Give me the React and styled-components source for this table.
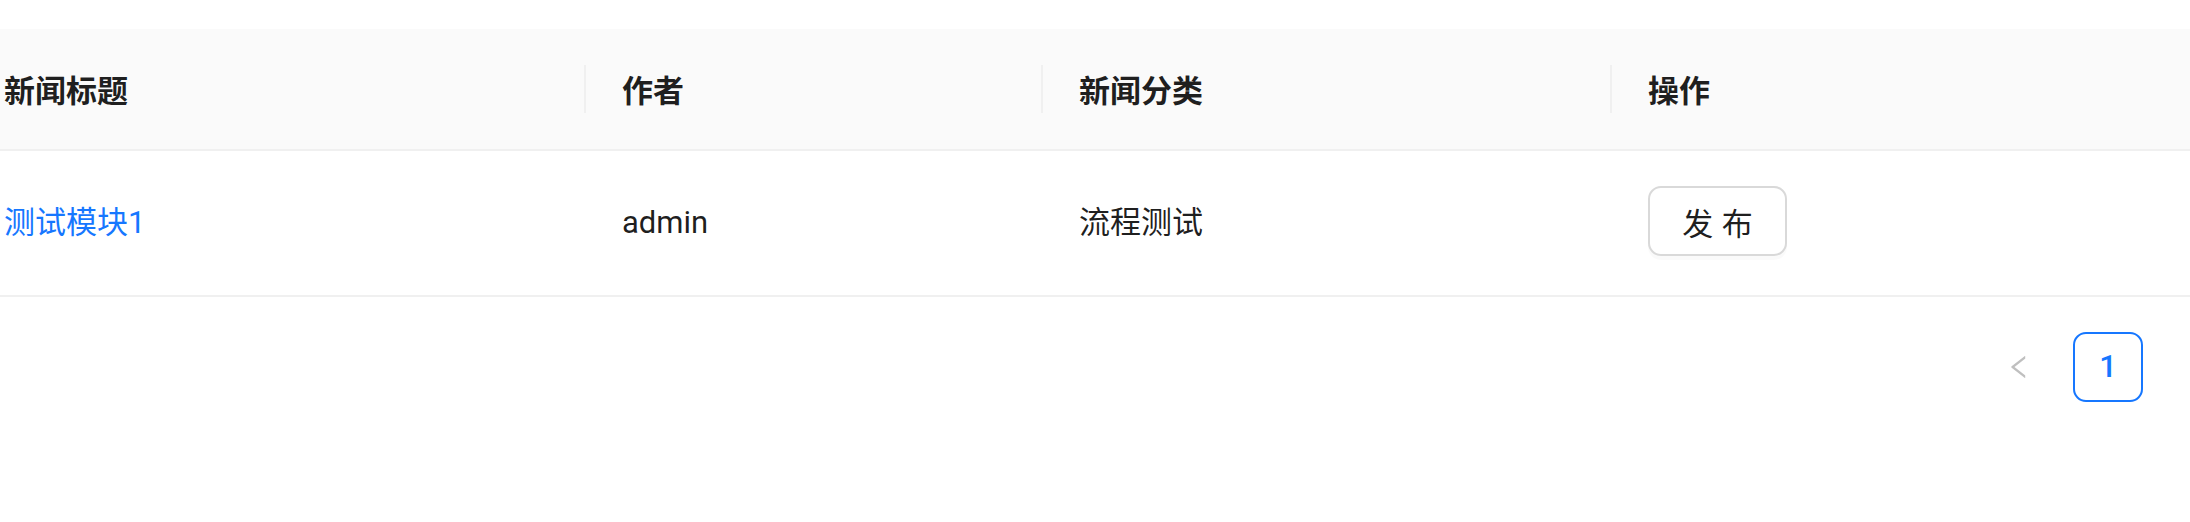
import React from 'react';
import styled, { createGlobalStyle } from 'styled-components';

const GlobalStyle = createGlobalStyle`
  html, body {
    margin: 0;
    padding: 0;
    background: #fff;
    overflow: hidden;
  }
  body {
    font-family: Roboto, "Noto Sans CJK SC", sans-serif;
    color: rgba(0, 0, 0, 0.88);
  }
`;

const columns = [
  { key: 'title', label: '新闻标题', width: 618 },
  { key: 'author', label: '作者', width: 457 },
  { key: 'category', label: '新闻分类', width: 569 },
  { key: 'action', label: '操作', width: 610 },
];

const rows = [
  { id: 1, title: '测试模块1', author: 'admin', category: '流程测试' },
];

const App = () => {
  return (
    <>
      <GlobalStyle />
      <Page>
        <Table>
          <colgroup>
            {columns.map((c) => (
              <col key={c.key} style={{ width: c.width }} />
            ))}
          </colgroup>
          <thead>
            <tr>
              {columns.map((c, i) => (
                <HeadCell key={c.key} $divider={i < columns.length - 1}>
                  {c.label}
                </HeadCell>
              ))}
            </tr>
          </thead>
          <tbody>
            {rows.map((r) => (
              <tr key={r.id}>
                <Cell>
                  <TitleLink href="#">{r.title}</TitleLink>
                </Cell>
                <Cell>{r.author}</Cell>
                <Cell>{r.category}</Cell>
                <Cell>
                  <Button type="button">
                    <span>发布</span>
                  </Button>
                </Cell>
              </tr>
            ))}
          </tbody>
        </Table>
        <Pagination>
          <PageArrow aria-disabled="true">
            <svg viewBox="0 0 1024 1024" width="30" height="30" fill="currentColor">
              <path d="M724 218.3V141c0-6.7-7.7-10.4-12.9-6.3L260.3 486.8a31.86 31.86 0 000 50.3l450.8 352.1c5.3 4.1 12.9.4 12.9-6.3v-77.3c0-4.9-2.3-9.6-6.1-12.6l-360-281 360-281.1c3.8-3 6.1-7.7 6.1-12.6z" />
            </svg>
          </PageArrow>
          <PageItem $active>1</PageItem>
        </Pagination>
      </Page>
    </>
  );
};

const Page = styled.div`
  width: 2190px;
  height: 522px;
  padding-top: 29px;
  box-sizing: border-box;
  overflow: hidden;
`;

const Table = styled.table`
  table-layout: fixed;
  border-collapse: collapse;
  border-spacing: 0;
  width: 2254px;
  margin-left: -32px;
  font-size: 31px;
`;

const HeadCell = styled.th`
  position: relative;
  text-align: left;
  padding: 35px 36px;
  line-height: 50px;
  font-weight: 700;
  font-family: "Noto Sans CJK SC", sans-serif;
  color: rgba(0, 0, 0, 0.88);
  background: #fafafa;
  border-bottom: 2px solid #f0f0f0;

  &::before {
    content: '';
    display: ${(p) => (p.$divider ? 'block' : 'none')};
    position: absolute;
    right: 0;
    top: 50%;
    transform: translateY(-50%);
    width: 2px;
    height: 48px;
    background: #f0f0f0;
  }
`;

const Cell = styled.td`
  padding: 35px 36px;
  line-height: 70px;
  font-family: Roboto, "Noto Sans CJK SC", sans-serif;
  color: rgba(0, 0, 0, 0.88);
  border-bottom: 2px solid #f0f0f0;
  vertical-align: middle;
`;

const TitleLink = styled.a`
  color: #1677ff;
  text-decoration: none;
  font-family: Roboto, "Noto Sans CJK SC", sans-serif;
`;

const Button = styled.button`
  display: inline-flex;
  align-items: center;
  justify-content: center;
  width: 139px;
  height: 70px;
  padding: 0;
  background: #fff;
  border: 2px solid #d9d9d9;
  border-radius: 13px;
  box-shadow: 0 4px 0 rgba(0, 0, 0, 0.02);
  font-family: "Noto Sans CJK SC", sans-serif;
  font-size: 31px;
  color: rgba(0, 0, 0, 0.88);
  cursor: pointer;

  span {
    letter-spacing: 0.28em;
    margin-right: -0.28em;
  }
`;

const Pagination = styled.div`
  display: flex;
  justify-content: flex-end;
  align-items: center;
  gap: 19px;
  margin-top: 35px;
  padding-right: 47px;
`;

const PageArrow = styled.div`
  width: 70px;
  height: 70px;
  display: flex;
  align-items: center;
  justify-content: center;
  color: rgba(0, 0, 0, 0.25);
`;

const PageItem = styled.div`
  width: 70px;
  height: 70px;
  box-sizing: border-box;
  display: flex;
  align-items: center;
  justify-content: center;
  border: 2px solid ${(p) => (p.$active ? '#1677ff' : 'transparent')};
  border-radius: 13px;
  color: ${(p) => (p.$active ? '#1677ff' : 'rgba(0, 0, 0, 0.88)')};
  font-family: Roboto, sans-serif;
  font-weight: 500;
  font-size: 31px;
`;

export default App;
